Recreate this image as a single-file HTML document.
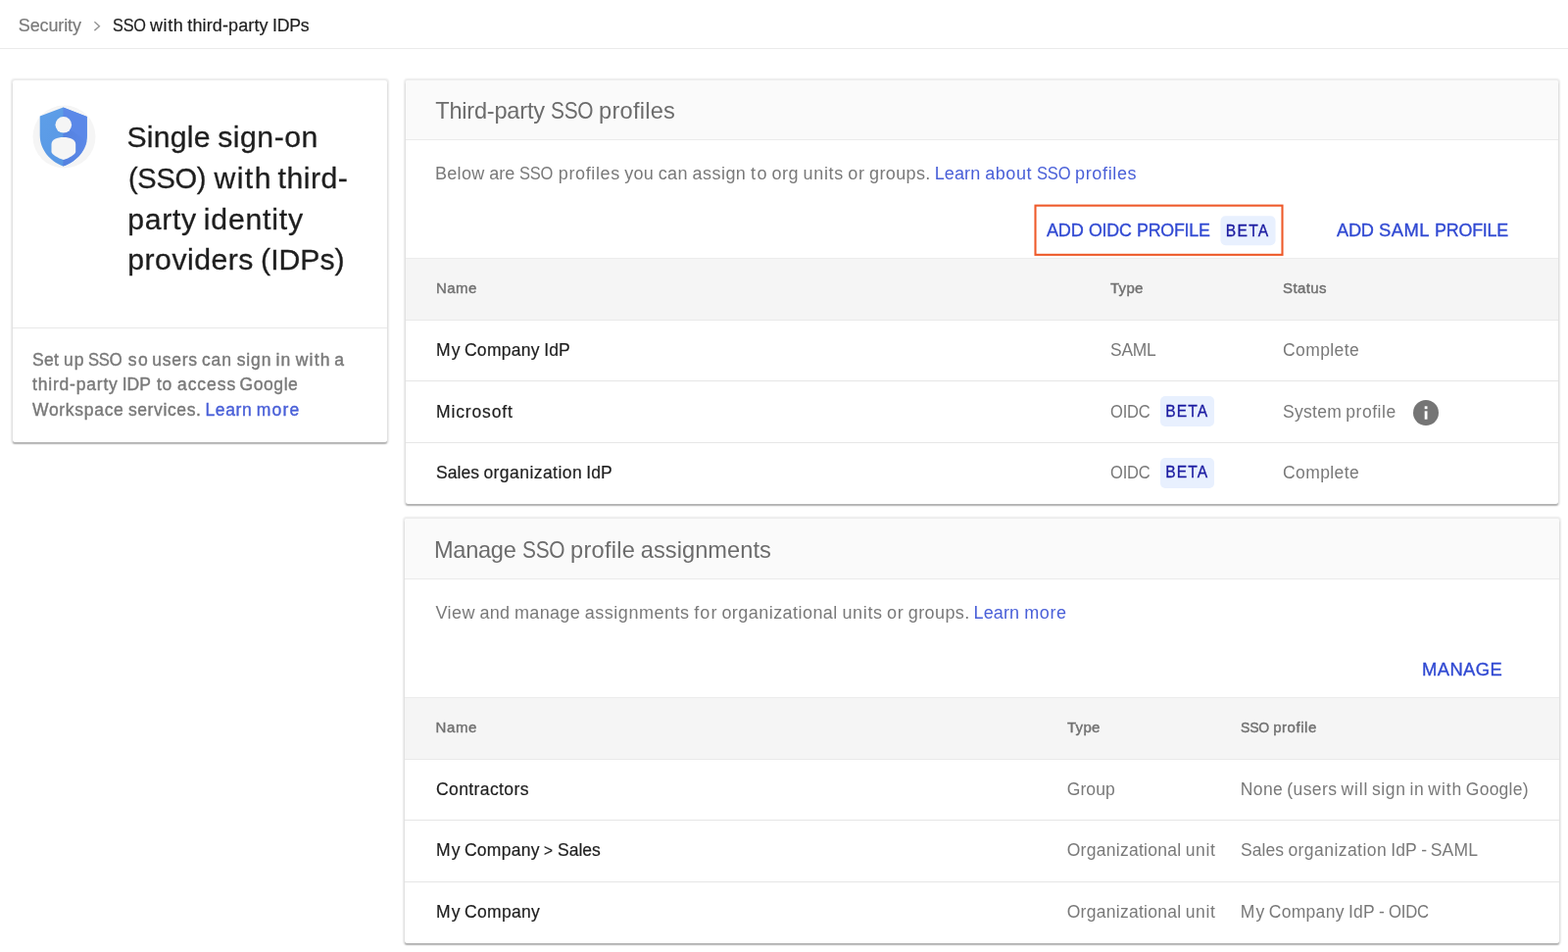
<!DOCTYPE html>
<html lang="en">
<head>
<meta charset="utf-8">
<title>SSO with third-party IDPs</title>
<style>

html,body{margin:0;padding:0;background:#fff;}
body{width:1600px;height:971px;position:relative;overflow:hidden;font-family:"Liberation Sans",Arial,sans-serif;}
.t{position:absolute;white-space:nowrap;margin:0;padding:0;font-weight:400;}
.tx{position:absolute;left:0;top:0;width:1600px;height:971px;will-change:transform;}
.abs{position:absolute;}
.hdr{left:0;top:0;width:1600px;height:49px;border-bottom:1px solid #ebebeb;}
.card{position:absolute;background:#fff;border-radius:2.5px;box-shadow:0 .3px 1.6px 1.45px rgba(0,0,0,.08),0 1.6px 1.4px -0.4px rgba(0,0,0,.25);}
.chead{position:absolute;left:0;top:0;right:0;height:60px;background:#fafafa;border-bottom:1px solid #ebebeb;border-radius:2px 2px 0 0;}
.thead{position:absolute;left:0;right:0;height:62px;background:#f5f5f5;border-top:1px solid #ececec;border-bottom:1px solid #e9e9e9;}
.rl{position:absolute;left:0;right:0;height:1px;background:#e6e6e6;}
.beta{position:absolute;background:#e8f0fe;border-radius:5px;}

</style>
</head>
<body>

<div class="abs hdr"></div>
<svg class="abs" style="left:94px;top:20px" width="10" height="13" viewBox="0 0 10 13"><path d="M2.4 2.3 L7.4 6.7 L2.4 11.1" fill="none" stroke="#959595" stroke-width="1.4"/></svg>

<div class="card" style="left:13px;top:82px;width:382px;height:369px;">
  <div class="rl" style="top:252px;background:#e8e8e8"></div>
  <svg class="abs" style="left:20px;top:24px" width="66" height="66" viewBox="0 0 66 66">
    <defs>
      <linearGradient id="sg" x1="0" y1="0" x2="1" y2="0"><stop offset="0" stop-color="#4f7cd9"/><stop offset="1" stop-color="#5b88e8"/></linearGradient>
      <linearGradient id="sl" x1="0" y1="0" x2="1" y2="1"><stop offset="0" stop-color="#5e9fe8"/><stop offset="1" stop-color="#5795e4"/></linearGradient>
    </defs>
    <circle cx="32.5" cy="33.5" r="32" fill="#f5f5f5"/>
    <path d="M31.5 3.5 L7.7 12.6 V32 C7.7 46 17.5 58.5 31.5 63.5 C46 58.5 55.8 46 55.8 32 V13 Z" fill="url(#sl)"/>
    <path d="M31.5 3.5 L55.8 13 V32 C55.8 46 46 58.5 31.5 63.5 Z" fill="#5b88e8"/>
    <path d="M31.5 21 L55.8 38 C54 49 44 59 31.5 63.5 Z" fill="url(#sg)" opacity=".55"/>
    <circle cx="31.8" cy="21.3" r="8.3" fill="#f5f5f5"/>
    <path d="M31.8 34 C25 34 19.5 36.5 19.5 41 V49 C19.5 51 26 55.5 31.8 57 C37.5 55.5 44.2 51 44.2 49 V41 C44.2 36.5 38.5 34 31.8 34 Z" fill="#f5f5f5"/>
  </svg>
</div>

<div class="card" style="left:414px;top:82px;width:1176px;height:432px;">
  <div class="chead"></div>
  <div class="thead" style="top:181px"></div>
  <div class="rl" style="top:306px"></div>
  <div class="rl" style="top:369px"></div>
  <svg class="abs" style="left:638px;top:123px" width="262" height="60" viewBox="0 0 262 60"><rect x="4.5" y="4.65" width="252" height="50.2" fill="none" stroke="#ee5a2a" stroke-width="2.1"/></svg>
  <div class="beta" style="left:831px;top:138px;width:56px;height:30px;transform:translate(.5px,.25px)"></div>
  <div class="beta" style="left:770px;top:322px;width:55px;height:31px;"></div>
  <div class="beta" style="left:770px;top:385px;width:55px;height:31px;"></div>
  <svg class="abs" style="left:1027px;top:324.5px" width="28" height="28" viewBox="0 0 28 28"><circle cx="14" cy="14" r="13" fill="#757575"/><rect x="12.7" y="12.3" width="2.8" height="8.4" fill="#fff"/><rect x="12.7" y="7.3" width="2.8" height="2.9" fill="#fff"/></svg>
</div>

<div class="card" style="left:413px;top:529px;width:1178px;height:433px;">
  <div class="chead" style="height:61px"></div>
  <div class="thead" style="top:182px"></div>
  <div class="rl" style="top:307px"></div>
  <div class="rl" style="top:370px"></div>
</div>

<div class="tx">
<div class="t" style="left:18.75px;top:14px;font-size:18px;line-height:25px;color:#7a7a7a;-webkit-text-stroke:0.2px #7a7a7a;letter-spacing:-0.11px;">Security</div>
<div class="t" style="left:114.5px;top:14px;font-size:18px;line-height:25px;color:#1e1e1e;-webkit-text-stroke:0.2px #1e1e1e;"><span style="display:inline-block;transform:scaleX(0.9027);transform-origin:0 50%;letter-spacing:-0.216px;margin-right:-3.962px">SSO</span> <span style="letter-spacing:0.623px;margin-right:-1.143px">with</span> <span style="letter-spacing:0.118px;margin-right:-0.638px">third-party</span> <span style="display:inline-block;transform:scaleX(0.9789);transform-origin:0 50%;letter-spacing:-0.216px;margin-right:-0.595px">IDPs</span></div>
<h1 class="t" style="left:129.5px;top:119px;font-size:30.2px;line-height:42px;color:#1e1e1e;-webkit-text-stroke:0.3px #1e1e1e;"><span style="letter-spacing:0.212px;margin-right:-0.869px">Single</span> <span style="letter-spacing:0.512px">sign-on</span></h1>
<div class="t" style="left:130.8px;top:161px;font-size:30.2px;line-height:42px;color:#1e1e1e;-webkit-text-stroke:0.3px #1e1e1e;"><span style="display:inline-block;transform:scaleX(0.9640);transform-origin:0 50%;letter-spacing:-0.362px;margin-right:-2.82px">(SSO)</span> <span style="letter-spacing:1.438px;margin-right:-2.654px">with</span> <span style="letter-spacing:0.489px">third-</span></div>
<div class="t" style="left:130.25px;top:203px;font-size:30.2px;line-height:42px;color:#1e1e1e;-webkit-text-stroke:0.3px #1e1e1e;"><span style="letter-spacing:0.671px;margin-right:-1.355px">party</span> <span style="letter-spacing:0.814px">identity</span></div>
<div class="t" style="left:130.25px;top:244px;font-size:30.2px;line-height:42px;color:#1e1e1e;-webkit-text-stroke:0.3px #1e1e1e;"><span style="letter-spacing:0.503px;margin-right:-1.234px">providers</span> <span style="letter-spacing:-0.01px">(IDPs)</span></div>
<div class="t" style="left:33px;top:355px;font-size:17.5px;line-height:24px;color:#797979;-webkit-text-stroke:0.4px #797979;"><span style="letter-spacing:0.32px;margin-right:-0.156px">Set</span> <span style="letter-spacing:1.04px;margin-right:-0.976px">up</span> <span style="display:inline-block;transform:scaleX(0.9478);transform-origin:0 50%;letter-spacing:-0.21px;margin-right:-0.834px">SSO</span> <span style="letter-spacing:1.542px;margin-right:-1.979px">so</span> <span style="letter-spacing:0.713px;margin-right:-0.549px">users</span> <span style="letter-spacing:0.887px;margin-right:-0.124px">can</span> <span style="letter-spacing:0.911px;margin-right:-0.847px">sign</span> <span style="letter-spacing:1.099px;margin-right:-0.435px">in</span> <span style="letter-spacing:1.241px;margin-right:-1.378px">with</span> <span style="">a</span></div>
<div class="t" style="left:33px;top:380px;font-size:17.5px;line-height:24px;color:#797979;-webkit-text-stroke:0.4px #797979;"><span style="letter-spacing:0.803px;margin-right:-0.746px">third-party</span> <span style="letter-spacing:-0.006px;margin-right:1.113px">IDP</span> <span style="letter-spacing:0.848px;margin-right:-0.091px">to</span> <span style="letter-spacing:0.951px;margin-right:-1.494px">access</span> <span style="letter-spacing:0.57px">Google</span></div>
<div class="t" style="left:33px;top:406px;font-size:17.5px;line-height:24px;color:#797979;-webkit-text-stroke:0.4px #797979;"><span style="letter-spacing:0.704px;margin-right:-0.531px">Workspace</span> <span style="letter-spacing:0.618px">services.</span></div>
<div class="t" style="left:209.5px;top:406px;font-size:17.5px;line-height:24px;color:#4a60d8;-webkit-text-stroke:0.4px #4a60d8;"><span style="letter-spacing:0.605px;margin-right:-0.382px">Learn</span> <span style="letter-spacing:1.2px">more</span></div>
<h2 class="t" style="left:444.25px;top:97px;font-size:23.6px;line-height:33px;color:#6c6c6c;"><span style="letter-spacing:-0.23px;margin-right:-0.575px">Third-party</span> <span style="display:inline-block;transform:scaleX(0.8837);transform-origin:0 50%;letter-spacing:-0.283px;margin-right:-6.252px">SSO</span> <span style="letter-spacing:0.243px">profiles</span></h2>
<div class="t" style="left:444px;top:165px;font-size:18px;line-height:25px;color:#797979;"><span style="letter-spacing:0.295px;margin-right:-0.296px">Below</span> <span style="letter-spacing:0.03px;margin-right:-0.031px">are</span> <span style="display:inline-block;transform:scaleX(0.9163);transform-origin:0 50%;letter-spacing:-0.216px;margin-right:-2.93px">SSO</span> <span style="letter-spacing:0.626px;margin-right:-0.626px">profiles</span> <span style="letter-spacing:0.18px;margin-right:-0.18px">you</span> <span style="letter-spacing:0.4px;margin-right:-0.401px">can</span> <span style="letter-spacing:0.461px;margin-right:-0.462px">assign</span> <span style="letter-spacing:1.481px;margin-right:-1.482px">to</span> <span style="letter-spacing:0.551px;margin-right:-0.552px">org</span> <span style="letter-spacing:0.654px;margin-right:-0.655px">units</span> <span style="letter-spacing:0.7px;margin-right:-0.701px">or</span> <span style="letter-spacing:0.391px">groups.</span></div>
<div class="t" style="left:953.75px;top:165px;font-size:18px;line-height:25px;color:#4a60d8;"><span style="letter-spacing:0.09px;margin-right:-0.083px">Learn</span> <span style="letter-spacing:0.571px;margin-right:-0.564px">about</span> <span style="display:inline-block;transform:scaleX(0.9179);transform-origin:0 50%;letter-spacing:-0.216px;margin-right:-2.864px">SSO</span> <span style="letter-spacing:0.64px">profiles</span></div>
<div class="t" style="left:1068px;top:222px;font-size:18.4px;line-height:26px;color:#3049d2;-webkit-text-stroke:0.35px #3049d2;"><span style="display:inline-block;transform:scaleX(0.9830);transform-origin:0 50%;letter-spacing:-0.221px;margin-right:-0.223px">ADD</span> <span style="display:inline-block;transform:scaleX(0.9658);transform-origin:0 50%;letter-spacing:-0.221px;margin-right:-1.121px">OIDC</span> <span style="display:inline-block;transform:scaleX(0.9685);transform-origin:0 50%;letter-spacing:-0.221px;margin-right:-2.212px">PROFILE</span></div>
<div class="t" style="left:1250.8px;top:225px;font-size:15.6px;line-height:22px;color:#1a1aa0;-webkit-text-stroke:0.3px #1a1aa0;letter-spacing:1.277px;">BETA</div>
<div class="t" style="left:1363.75px;top:222px;font-size:18.4px;line-height:26px;color:#3049d2;-webkit-text-stroke:0.35px #3049d2;"><span style="display:inline-block;transform:scaleX(0.9877);transform-origin:0 50%;letter-spacing:-0.221px;margin-right:-0.021px">ADD</span> <span style="letter-spacing:0.436px;margin-right:-0.206px">SAML</span> <span style="display:inline-block;transform:scaleX(0.9731);transform-origin:0 50%;letter-spacing:-0.221px;margin-right:-1.859px">PROFILE</span></div>
<div class="t" style="left:445px;top:283px;font-size:15px;line-height:21px;color:#707070;-webkit-text-stroke:0.4px #707070;letter-spacing:0.443px;">Name</div>
<div class="t" style="left:1133px;top:283px;font-size:15px;line-height:21px;color:#707070;-webkit-text-stroke:0.4px #707070;letter-spacing:0.274px;">Type</div>
<div class="t" style="left:1309px;top:283px;font-size:15px;line-height:21px;color:#707070;-webkit-text-stroke:0.4px #707070;letter-spacing:0.395px;">Status</div>
<div class="t" style="left:445px;top:345px;font-size:17.5px;line-height:24px;color:#1e1e1e;-webkit-text-stroke:0.2px #1e1e1e;"><span style="letter-spacing:1.088px;margin-right:-1.46px">My</span> <span style="letter-spacing:0.296px;margin-right:-0.668px">Company</span> <span style="letter-spacing:0.168px">IdP</span></div>
<div class="t" style="left:1133px;top:345px;font-size:17.5px;line-height:24px;color:#797979;"><span style="display:inline-block;transform:scaleX(0.9938);transform-origin:0 50%;letter-spacing:-0.21px;margin-right:-0.082px">SAML</span></div>
<div class="t" style="left:1309px;top:345px;font-size:17.5px;line-height:24px;color:#797979;letter-spacing:0.405px;">Complete</div>
<div class="t" style="left:445px;top:408px;font-size:17.5px;line-height:24px;color:#1e1e1e;-webkit-text-stroke:0.2px #1e1e1e;letter-spacing:0.86px;">Microsoft</div>
<div class="t" style="left:1133px;top:408px;font-size:17.5px;line-height:24px;color:#797979;"><span style="display:inline-block;transform:scaleX(0.9424);transform-origin:0 50%;letter-spacing:-0.21px;margin-right:-2.272px">OIDC</span></div>
<div class="t" style="left:1189.2px;top:409px;font-size:15.6px;line-height:22px;color:#1a1aa0;-webkit-text-stroke:0.3px #1a1aa0;letter-spacing:1.144px;">BETA</div>
<div class="t" style="left:1309px;top:408px;font-size:17.5px;line-height:24px;color:#797979;"><span style="letter-spacing:0.278px;margin-right:-0.679px">System</span> <span style="letter-spacing:0.562px">profile</span></div>
<div class="t" style="left:445px;top:470px;font-size:17.5px;line-height:24px;color:#1e1e1e;-webkit-text-stroke:0.2px #1e1e1e;"><span style="letter-spacing:0.031px;margin-right:-0.412px">Sales</span> <span style="letter-spacing:0.447px;margin-right:-0.828px">organization</span> <span style="letter-spacing:0.141px">IdP</span></div>
<div class="t" style="left:1133px;top:470px;font-size:17.5px;line-height:24px;color:#797979;"><span style="display:inline-block;transform:scaleX(0.9424);transform-origin:0 50%;letter-spacing:-0.21px;margin-right:-2.272px">OIDC</span></div>
<div class="t" style="left:1189.2px;top:471px;font-size:15.6px;line-height:22px;color:#1a1aa0;-webkit-text-stroke:0.3px #1a1aa0;letter-spacing:1.144px;">BETA</div>
<div class="t" style="left:1309px;top:470px;font-size:17.5px;line-height:24px;color:#797979;letter-spacing:0.405px;">Complete</div>
<h2 class="t" style="left:443.25px;top:545px;font-size:23.6px;line-height:33px;color:#6c6c6c;"><span style="display:inline-block;transform:scaleX(0.9988);transform-origin:0 50%;letter-spacing:-0.283px;margin-right:-0.623px">Manage</span> <span style="display:inline-block;transform:scaleX(0.8841);transform-origin:0 50%;letter-spacing:-0.283px;margin-right:-6.228px">SSO</span> <span style="letter-spacing:0.259px;margin-right:-1.061px">profile</span> <span style="letter-spacing:0.073px">assignments</span></h2>
<div class="t" style="left:444.5px;top:613px;font-size:18px;line-height:25px;color:#797979;"><span style="letter-spacing:0.403px;margin-right:-0.401px">View</span> <span style="letter-spacing:0.272px;margin-right:-0.269px">and</span> <span style="letter-spacing:0.314px;margin-right:-0.312px">manage</span> <span style="letter-spacing:0.534px;margin-right:-0.531px">assignments</span> <span style="letter-spacing:1.128px;margin-right:-1.126px">for</span> <span style="letter-spacing:0.45px;margin-right:-0.448px">organizational</span> <span style="letter-spacing:0.66px;margin-right:-0.658px">units</span> <span style="letter-spacing:0.711px;margin-right:-0.709px">or</span> <span style="letter-spacing:0.397px">groups.</span></div>
<div class="t" style="left:993.5px;top:613px;font-size:18px;line-height:25px;color:#4a60d8;"><span style="letter-spacing:0.134px;margin-right:-0.11px">Learn</span> <span style="letter-spacing:0.634px">more</span></div>
<div class="t" style="left:1451px;top:670px;font-size:18.4px;line-height:26px;color:#3049d2;-webkit-text-stroke:0.35px #3049d2;letter-spacing:0.412px;">MANAGE</div>
<div class="t" style="left:444.6px;top:731px;font-size:15px;line-height:21px;color:#707070;-webkit-text-stroke:0.4px #707070;letter-spacing:0.577px;">Name</div>
<div class="t" style="left:1089px;top:731px;font-size:15px;line-height:21px;color:#707070;-webkit-text-stroke:0.4px #707070;letter-spacing:0.274px;">Type</div>
<div class="t" style="left:1266px;top:731px;font-size:15px;line-height:21px;color:#707070;-webkit-text-stroke:0.4px #707070;"><span style="display:inline-block;transform:scaleX(0.9343);transform-origin:0 50%;letter-spacing:-0.18px;margin-right:-2.18px">SSO</span> <span style="letter-spacing:0.56px">profile</span></div>
<div class="t" style="left:445px;top:793px;font-size:17.5px;line-height:24px;color:#1e1e1e;-webkit-text-stroke:0.2px #1e1e1e;letter-spacing:0.4px;">Contractors</div>
<div class="t" style="left:1088.7px;top:793px;font-size:17.5px;line-height:24px;color:#797979;letter-spacing:0.099px;">Group</div>
<div class="t" style="left:1265.8px;top:793px;font-size:17.5px;line-height:24px;color:#797979;"><span style="letter-spacing:0.37px;margin-right:-0.736px">None</span> <span style="letter-spacing:0.419px;margin-right:-0.785px">(users</span> <span style="letter-spacing:0.856px;margin-right:-1.222px">will</span> <span style="letter-spacing:0.626px;margin-right:-0.992px">sign</span> <span style="letter-spacing:0.807px;margin-right:-1.174px">in</span> <span style="letter-spacing:0.957px;margin-right:-1.323px">with</span> <span style="letter-spacing:0.227px">Google)</span></div>
<div class="t" style="left:445px;top:855px;font-size:17.5px;line-height:24px;color:#1e1e1e;-webkit-text-stroke:0.2px #1e1e1e;"><span style="letter-spacing:1.048px;margin-right:-1.428px">My</span> <span style="letter-spacing:0.276px;margin-right:-0.955px">Company</span> <span style="display:inline-block;transform:scale(0.88,.95);transform-origin:0 56%;margin-right:-0.839px">&gt;</span> <span style="letter-spacing:0.035px">Sales</span></div>
<div class="t" style="left:1088.7px;top:855px;font-size:17.5px;line-height:24px;color:#797979;"><span style="letter-spacing:0.278px;margin-right:-0.665px">Organizational</span> <span style="letter-spacing:0.671px">unit</span></div>
<div class="t" style="left:1266px;top:855px;font-size:17.5px;line-height:24px;color:#797979;"><span style="letter-spacing:0.032px;margin-right:-0.412px">Sales</span> <span style="letter-spacing:0.448px;margin-right:-0.828px">organization</span> <span style="letter-spacing:0.142px;margin-right:-0.523px">IdP</span> <span style="margin-right:-1.214px">-</span> <span style="letter-spacing:0.146px">SAML</span></div>
<div class="t" style="left:445px;top:918px;font-size:17.5px;line-height:24px;color:#1e1e1e;-webkit-text-stroke:0.2px #1e1e1e;"><span style="letter-spacing:1.127px;margin-right:-1.492px">My</span> <span style="letter-spacing:0.317px">Company</span></div>
<div class="t" style="left:1088.7px;top:918px;font-size:17.5px;line-height:24px;color:#797979;"><span style="letter-spacing:0.278px;margin-right:-0.665px">Organizational</span> <span style="letter-spacing:0.671px">unit</span></div>
<div class="t" style="left:1265.8px;top:918px;font-size:17.5px;line-height:24px;color:#797979;"><span style="letter-spacing:1.098px;margin-right:-1.469px">My</span> <span style="letter-spacing:0.302px;margin-right:-0.672px">Company</span> <span style="letter-spacing:0.174px;margin-right:-0.544px">IdP</span> <span style="margin-right:-1.192px">-</span> <span style="display:inline-block;transform:scaleX(0.9536);transform-origin:0 50%;letter-spacing:-0.21px;margin-right:-1.792px">OIDC</span></div>
</div>
</body>
</html>
